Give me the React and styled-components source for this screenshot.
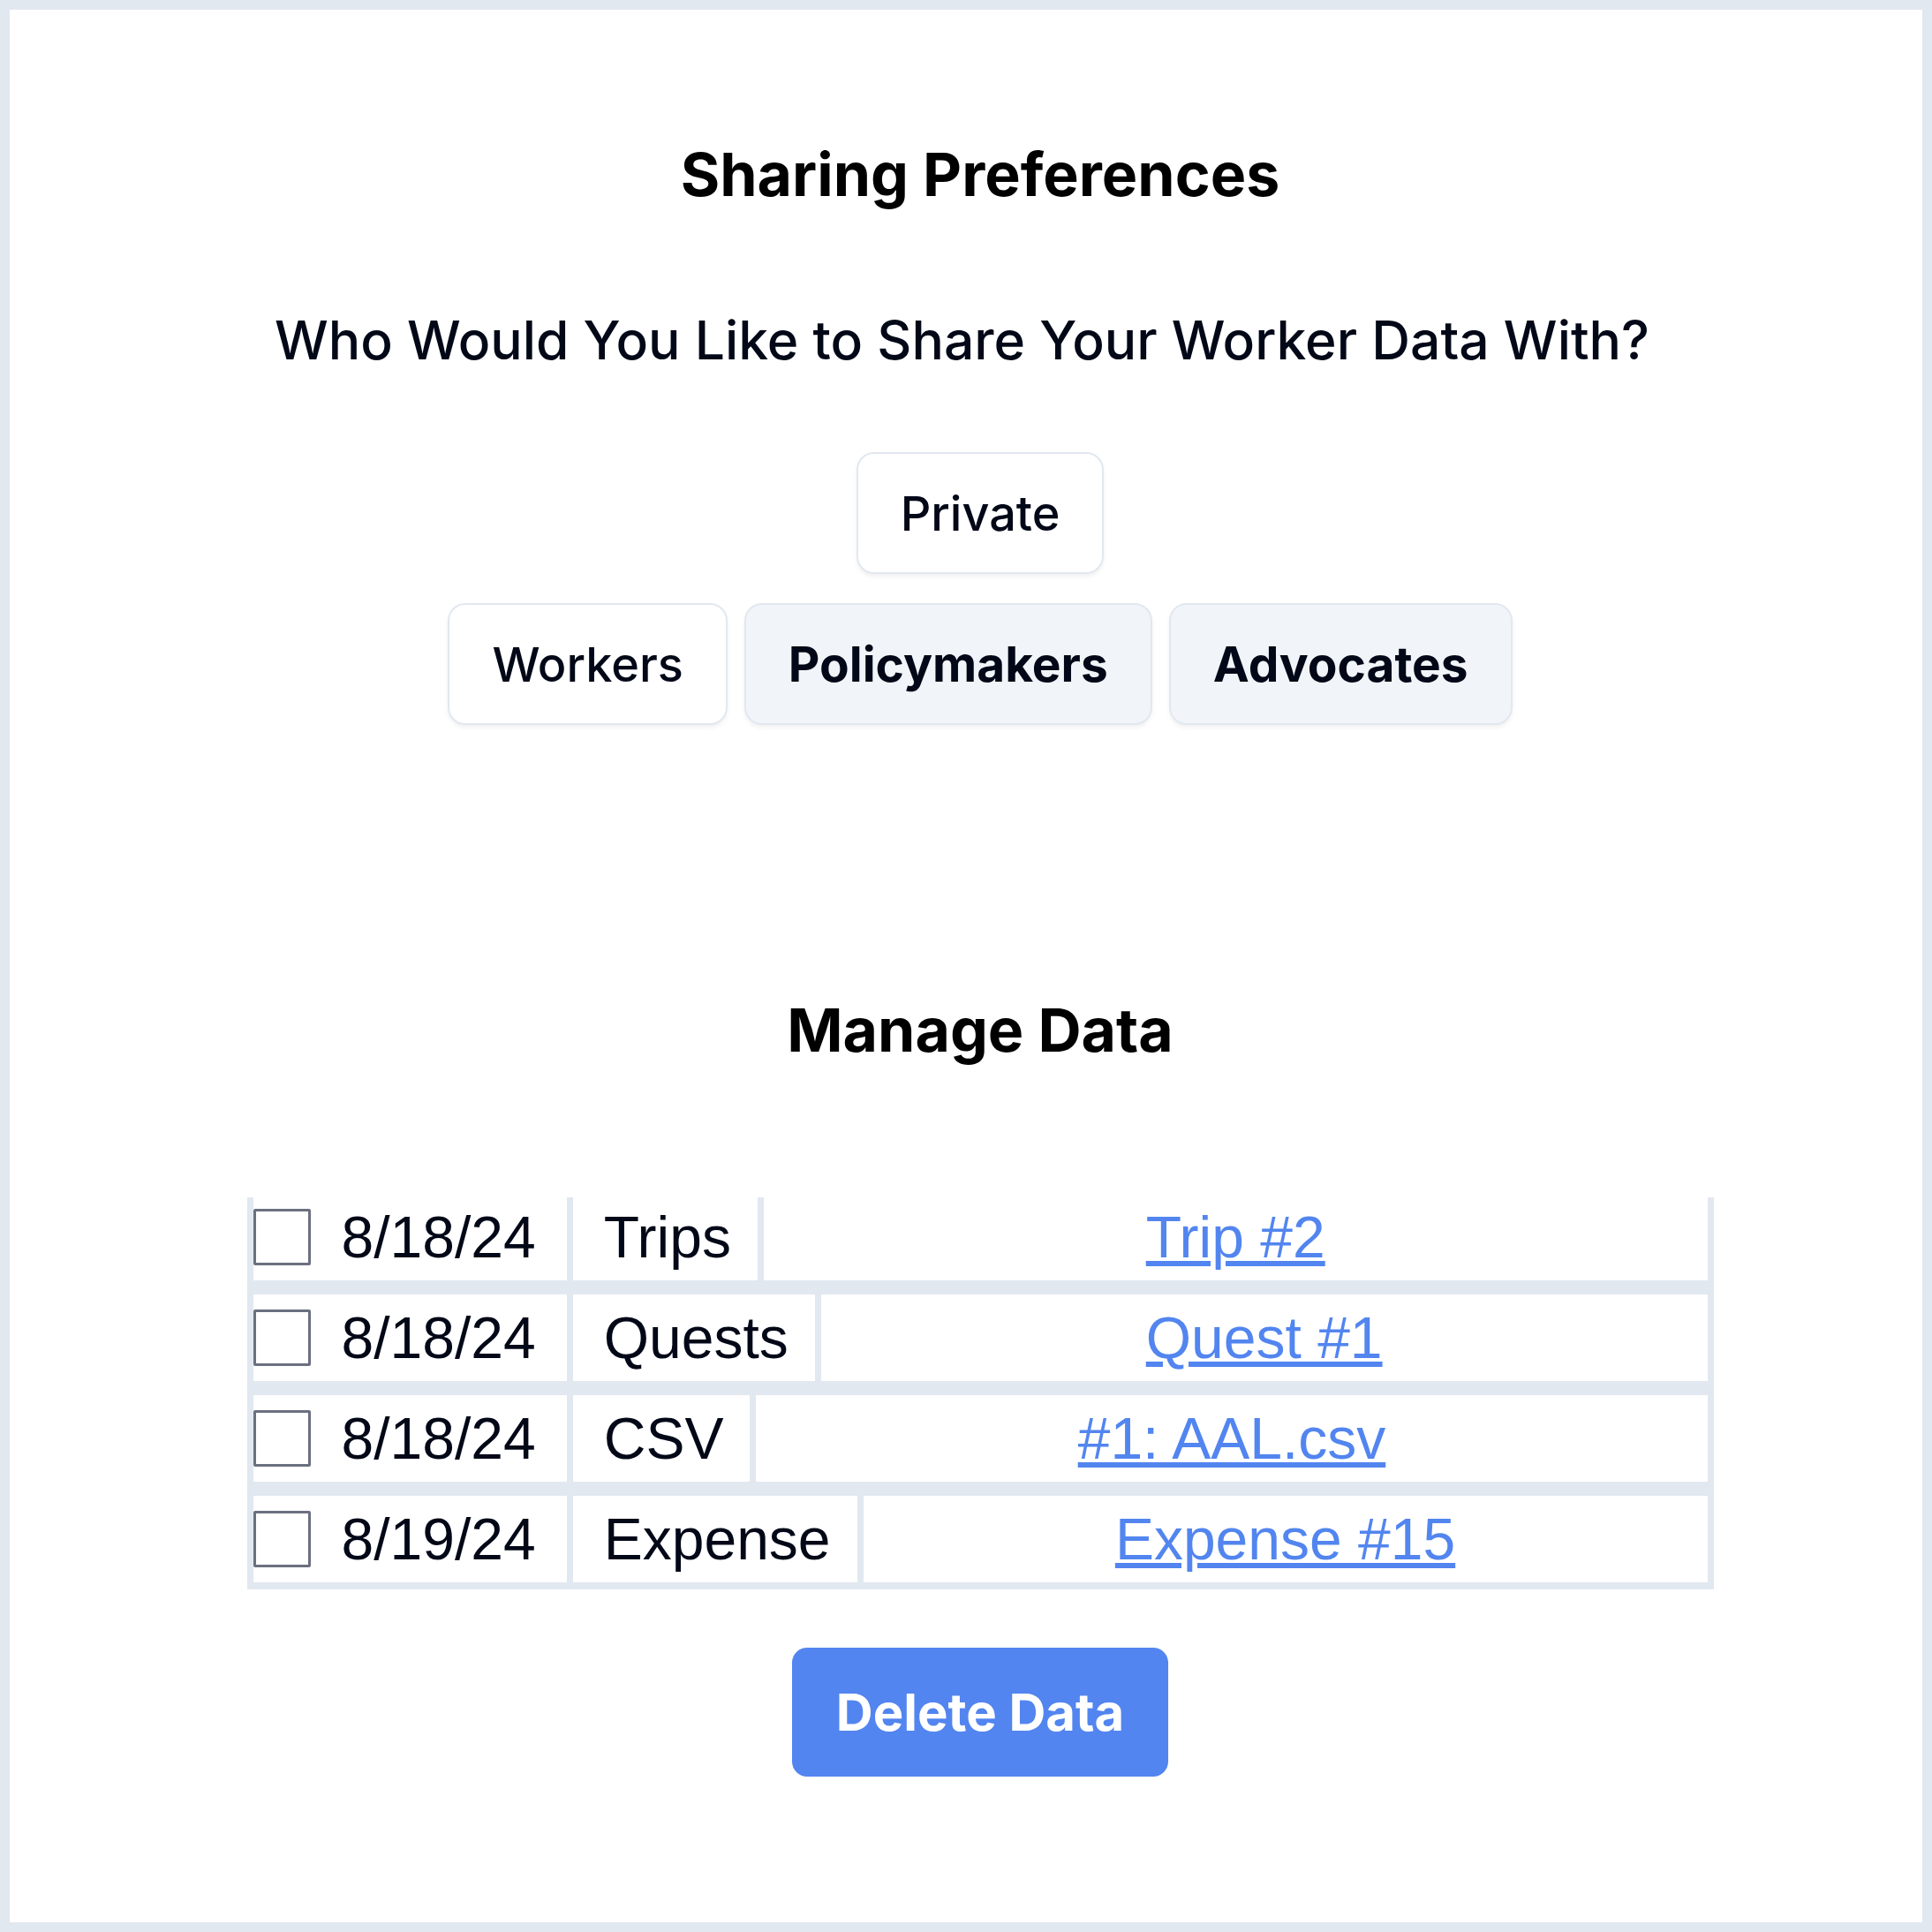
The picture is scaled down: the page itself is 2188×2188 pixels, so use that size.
import React from 'react';
import styled, { createGlobalStyle } from 'styled-components';

// sharing preferences + manage data screen

const GlobalStyle = createGlobalStyle`
  html, body {
    margin: 0;
    padding: 0;
    background: #e2e8f0;
  }
  body {
    padding: 11px;
    font-family: Inter, "Noto Sans", sans-serif;
  }
`;

const Panel = styled.main`
  box-sizing: border-box;
  height: 2166px;
  background: #ffffff;
  display: flex;
  flex-direction: column;
  align-items: center;
  padding-left: 32px;
`;

const Heading = styled.h2`
  margin: ${(p) => p.$top}px 0 0;
  font-family: Inter, sans-serif;
  font-size: 68px;
  line-height: 69px;
  font-weight: 700;
  color: #000000;
`;

const Question = styled.h3`
  margin: 123px 41px 0 0;
  font-family: Inter, sans-serif;
  font-size: 60.6px;
  line-height: 60px;
  font-weight: 500;
  color: #020817;
`;

const ChoiceRow = styled.div`
  display: flex;
  gap: 19px;
  margin-top: ${(p) => p.$top}px;
`;

const Choice = styled.button`
  box-sizing: border-box;
  height: 138px;
  padding: 0 48px;
  border: 2px solid #e2e8f0;
  border-radius: 20px;
  background: ${(p) => (p.$active ? '#f1f5f9' : '#ffffff')};
  box-shadow: 0 3px 5px rgba(15, 23, 42, 0.06);
  font-family: Inter, sans-serif;
  font-size: ${(p) => (p.$active ? 55 : 54)}px;
  font-weight: ${(p) => (p.$active ? 700 : 500)};
  color: #020817;
  cursor: pointer;
`;

const TableFrame = styled.div`
  box-sizing: border-box;
  width: 1661px;
  margin-top: 155px;
  padding: 0 7px 8px;
  background: #e2e8f0;
  overflow: hidden;
`;

const Rows = styled.div`
  display: flex;
  flex-direction: column;
  gap: 16px;
  margin-top: -4px;
`;

const Row = styled.div`
  display: flex;
  gap: 7px;
  height: 98px;
`;

const Cell = styled.div`
  display: flex;
  align-items: center;
  background: #ffffff;
  font-family: "Liberation Sans", Arial, sans-serif;
  font-size: 66px;
  line-height: 1;
  color: #020817;
`;

const DateCell = styled(Cell)`
  gap: 35px;
  padding-right: 35px;
`;

const TypeCell = styled(Cell)`
  padding: 0 30px 0 35px;
`;

const LinkCell = styled(Cell)`
  flex: 1;
  justify-content: center;
`;

const Check = styled.input`
  appearance: none;
  box-sizing: border-box;
  width: 65px;
  height: 64px;
  margin: 0;
  border: 3px solid #6b7080;
  border-radius: 2px;
  background: #ffffff;
`;

const ItemLink = styled.a`
  color: #5285ef;
  text-decoration: underline;
  text-decoration-thickness: 6px;
  text-underline-offset: 4px;
`;

const DeleteButton = styled.button`
  box-sizing: border-box;
  height: 146px;
  margin-top: 66px;
  padding: 0 50px;
  border: none;
  border-radius: 17px;
  background: #5285ef;
  color: #ffffff;
  font-family: Inter, sans-serif;
  font-size: 58px;
  font-weight: 700;
  cursor: pointer;
`;

const items = [
  { date: '8/18/24', type: 'Trips', label: 'Trip #2' },
  { date: '8/18/24', type: 'Quests', label: 'Quest #1' },
  { date: '8/18/24', type: 'CSV', label: '#1: AAL.csv' },
  { date: '8/19/24', type: 'Expense', label: 'Expense #15' },
];

export default function App() {
  return (
    <>
      <GlobalStyle />
      <Panel>
        <Heading $top={152}>Sharing Preferences</Heading>
        <Question>Who Would You Like to Share Your Worker Data With?</Question>
        <ChoiceRow $top={97}>
          <Choice>Private</Choice>
        </ChoiceRow>
        <ChoiceRow $top={33}>
          <Choice>Workers</Choice>
          <Choice $active>Policymakers</Choice>
          <Choice $active>Advocates</Choice>
        </ChoiceRow>
        <Heading $top={311}>Manage Data</Heading>
        <TableFrame>
          <Rows>
            {items.map((it, i) => (
              <Row key={i}>
                <DateCell>
                  <Check type="checkbox" />
                  {it.date}
                </DateCell>
                <TypeCell>{it.type}</TypeCell>
                <LinkCell>
                  <ItemLink href="#">{it.label}</ItemLink>
                </LinkCell>
              </Row>
            ))}
          </Rows>
        </TableFrame>
        <DeleteButton>Delete Data</DeleteButton>
      </Panel>
    </>
  );
}
